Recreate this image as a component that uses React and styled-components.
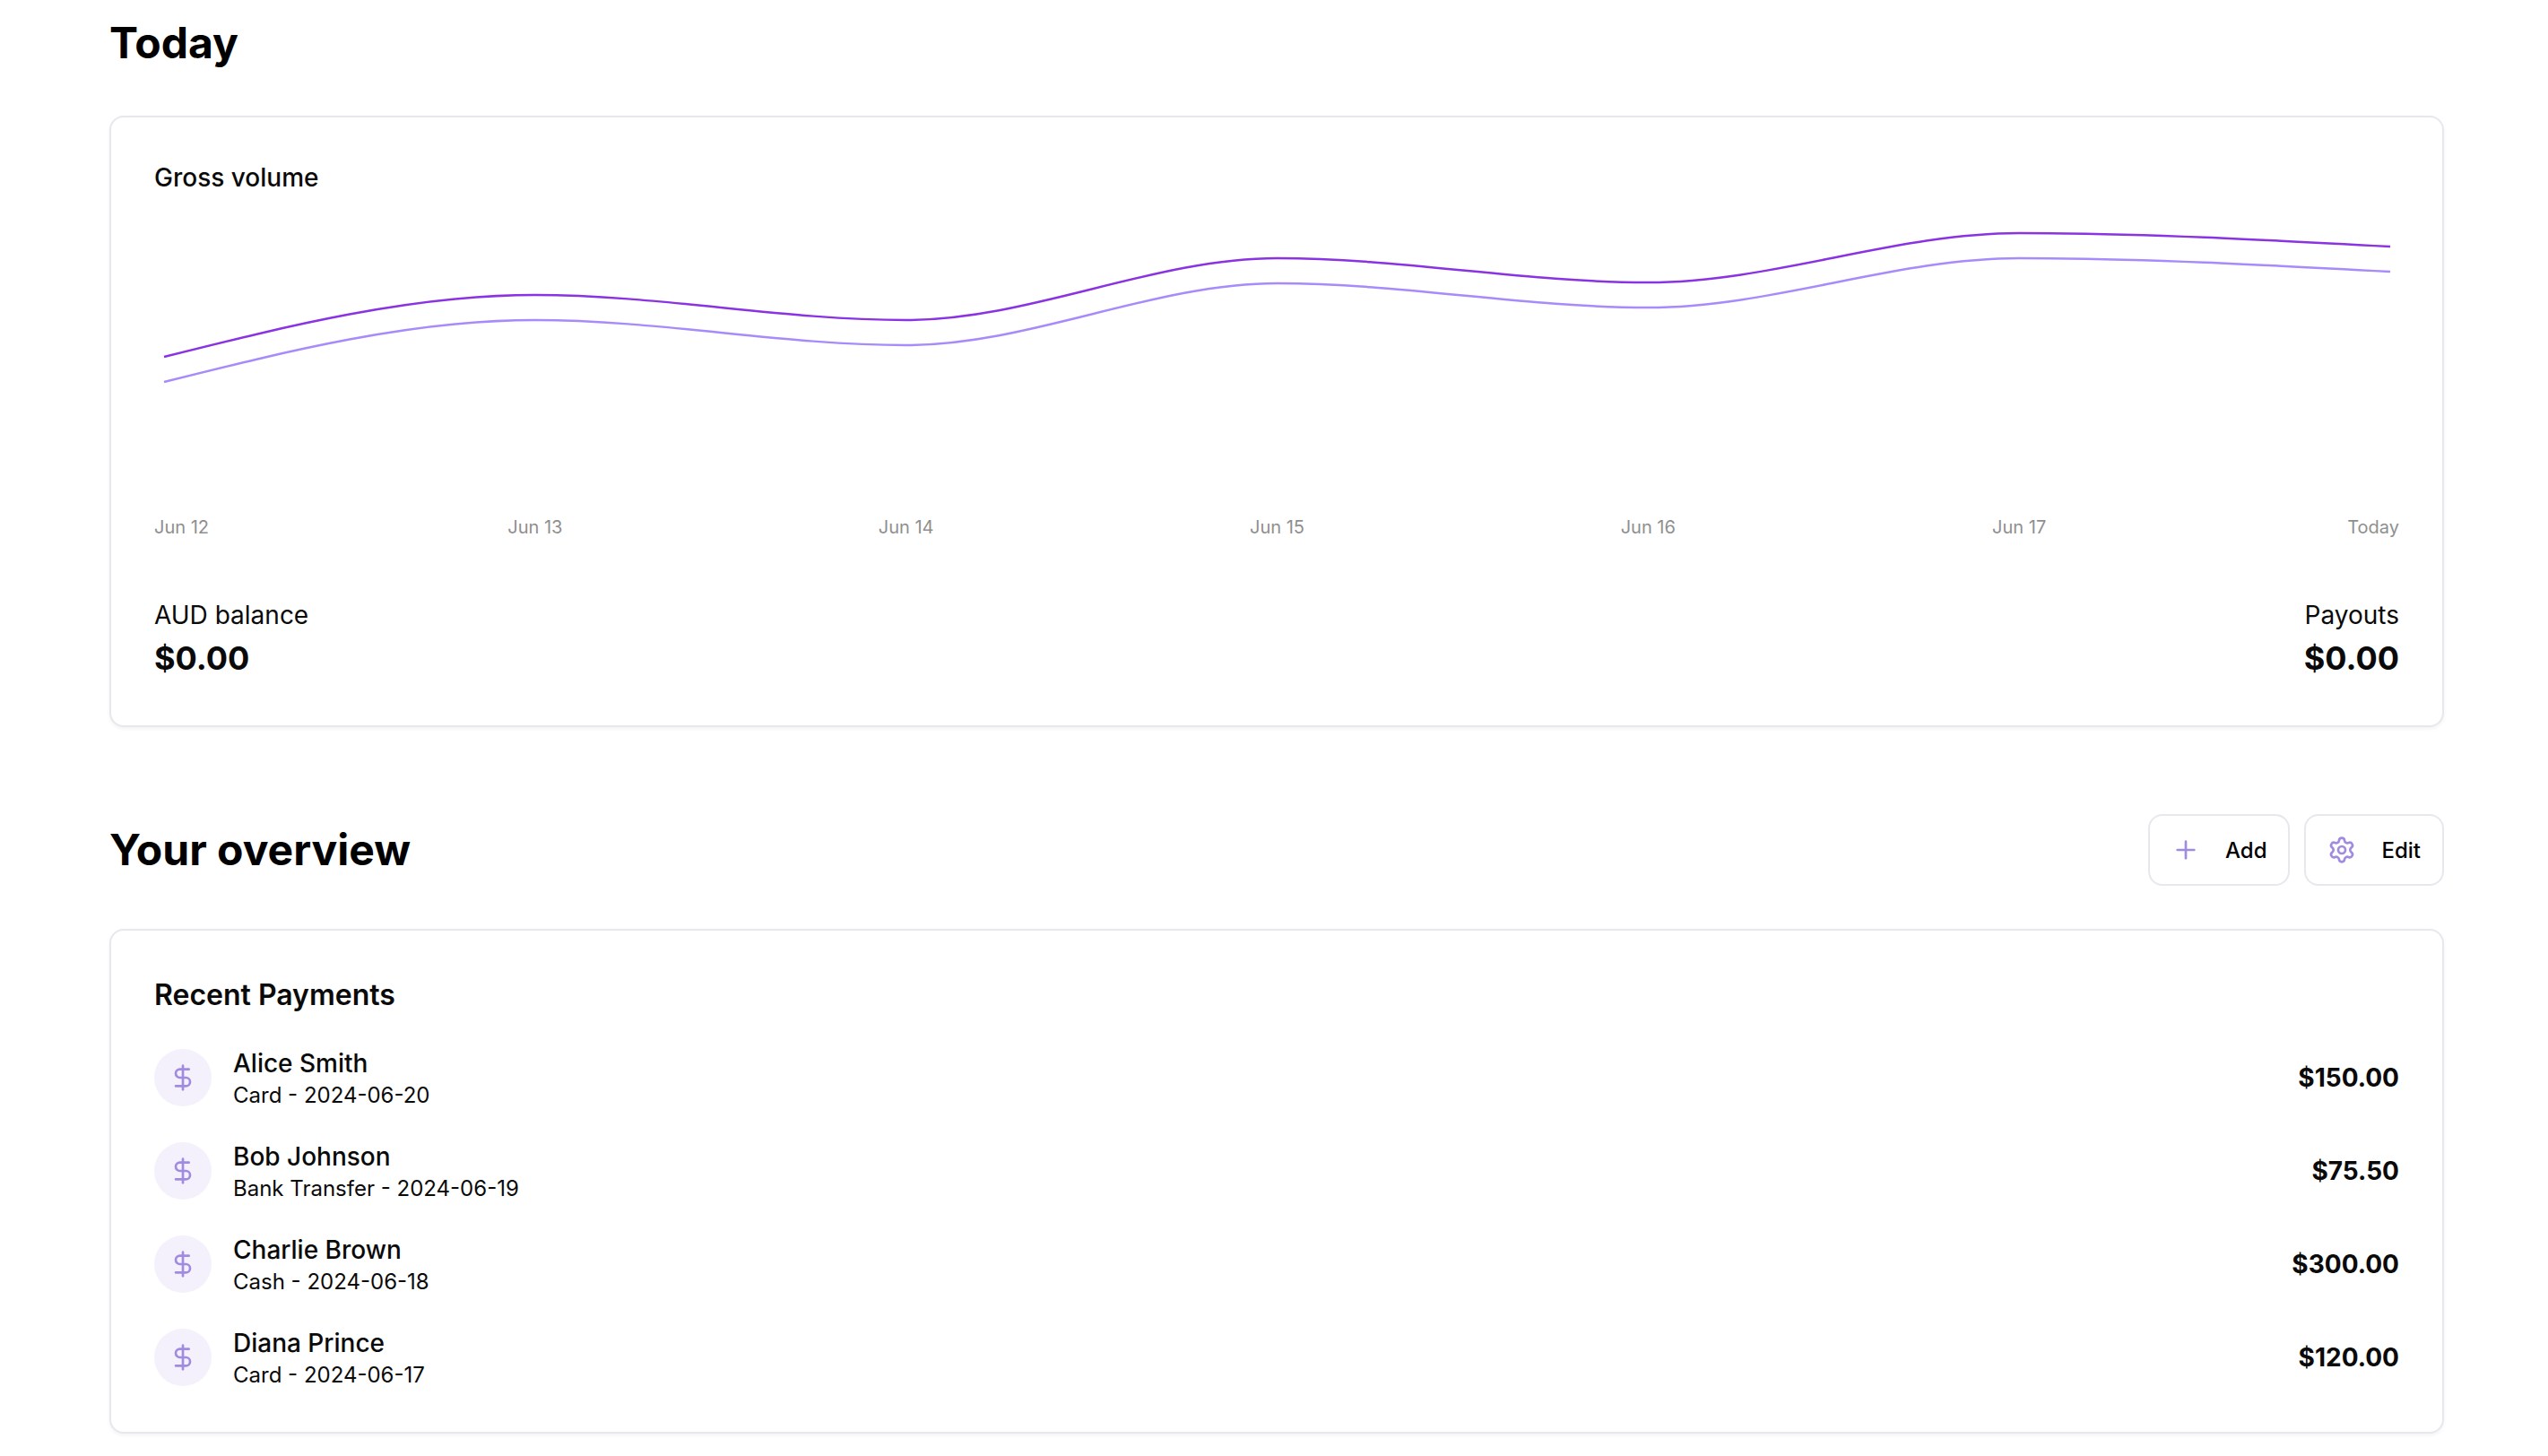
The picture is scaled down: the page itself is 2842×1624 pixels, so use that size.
import React from "react";
import styled, { createGlobalStyle } from "styled-components";
import { DollarSign, Plus, Settings } from "lucide-react";

const CHART_WIDTH = 2504;
const POINT_START = 11;
const POINT_STEP = 413.83;
const LINE_OFFSET = 28;

const volume = [182, 113, 141, 72, 99, 44, 59];
const ticks = ["Jun 12", "Jun 13", "Jun 14", "Jun 15", "Jun 16", "Jun 17", "Today"];

const payments = [
  { name: "Alice Smith", detail: "Card - 2024-06-20", amount: "$150.00" },
  { name: "Bob Johnson", detail: "Bank Transfer - 2024-06-19", amount: "$75.50" },
  { name: "Charlie Brown", detail: "Cash - 2024-06-18", amount: "$300.00" },
  { name: "Diana Prince", detail: "Card - 2024-06-17", amount: "$120.00" },
];

// monotone curve through evenly spaced points
function linePath(values, offset) {
  const xs = values.map((_, i) => POINT_START + i * POINT_STEP);
  const ys = values.map((v) => v + offset);
  const slopes = ys.slice(1).map((y, i) => (y - ys[i]) / POINT_STEP);
  const tangents = ys.map((_, i) => {
    if (i === 0 || i === ys.length - 1) return null;
    const a = slopes[i - 1];
    const b = slopes[i];
    if (a * b <= 0) return 0;
    return (2 * a * b) / (a + b);
  });
  tangents[0] = (3 * slopes[0] - tangents[1]) / 2;
  const last = ys.length - 1;
  tangents[last] = (3 * slopes[last - 1] - tangents[last - 1]) / 2;
  let d = `M${xs[0]},${ys[0]}`;
  for (let i = 0; i < last; i++) {
    const h = POINT_STEP / 3;
    d += `C${xs[i] + h},${ys[i] + tangents[i] * h} ${xs[i + 1] - h},${
      ys[i + 1] - tangents[i + 1] * h
    } ${xs[i + 1]},${ys[i + 1]}`;
  }
  return d;
}

function tickProps(i) {
  if (i === 0) return { x: 0, textAnchor: "start" };
  if (i === ticks.length - 1) return { x: CHART_WIDTH, textAnchor: "end" };
  return { x: POINT_START + i * POINT_STEP, textAnchor: "middle" };
}

function App() {
  return (
    <Page>
      <GlobalStyle />
      <PageTitle>Today</PageTitle>
      <VolumeCard>
        <CardLabel>Gross volume</CardLabel>
        <ChartSvg viewBox={`0 0 ${CHART_WIDTH} 425`}>
          <path d={linePath(volume, LINE_OFFSET)} fill="none" stroke="#a78bfa" strokeWidth="2.5" />
          <path d={linePath(volume, 0)} fill="none" stroke="#8a33e2" strokeWidth="2.5" />
          {ticks.map((tick, i) => (
            <TickText key={tick} y="379" {...tickProps(i)}>
              {tick}
            </TickText>
          ))}
        </ChartSvg>
        <StatsRow>
          <Stat>
            <StatLabel>AUD balance</StatLabel>
            <StatValue>$0.00</StatValue>
          </Stat>
          <Stat align="right">
            <StatLabel>Payouts</StatLabel>
            <StatValue>$0.00</StatValue>
          </Stat>
        </StatsRow>
      </VolumeCard>
      <OverviewHeader>
        <PageTitle as="h2">Your overview</PageTitle>
        <Actions>
          <ActionButton>
            <Plus size={32} strokeWidth={2} />
            Add
          </ActionButton>
          <ActionButton>
            <Settings size={32} strokeWidth={2} />
            Edit
          </ActionButton>
        </Actions>
      </OverviewHeader>
      <PaymentsCard>
        <PaymentsTitle>Recent Payments</PaymentsTitle>
        <PaymentList>
          {payments.map((payment) => (
            <PaymentRow key={payment.name}>
              <PaymentIcon>
                <DollarSign size={32} strokeWidth={2} />
              </PaymentIcon>
              <PaymentText>
                <PaymentName>{payment.name}</PaymentName>
                <PaymentDetail>{payment.detail}</PaymentDetail>
              </PaymentText>
              <PaymentAmount>{payment.amount}</PaymentAmount>
            </PaymentRow>
          ))}
        </PaymentList>
      </PaymentsCard>
    </Page>
  );
}

export default App;

const GlobalStyle = createGlobalStyle`
  * {
    box-sizing: border-box;
  }
  body {
    margin: 0;
    background: #fff;
    color: #0a0a0a;
    font-family: Inter, "Liberation Sans", sans-serif;
  }
`;
const Page = styled.div`
  height: 1624px;
  overflow: hidden;
  padding: 20px 116px 0 122px;
`;
const PageTitle = styled.h1`
  margin: 0;
  color: #000;
  font-size: 48px;
  font-weight: 700;
  line-height: 56px;
`;
const Card = styled.section`
  background: #fff;
  border: 2px solid #e7e7ee;
  border-radius: 16px;
  box-shadow: 0 2px 4px rgba(0, 0, 0, 0.05);
`;
const VolumeCard = styled(Card)`
  height: 682px;
  margin-top: 53px;
  padding: 49px 48px 48px;
`;
const CardLabel = styled.div`
  font-size: 28px;
  font-weight: 500;
  line-height: 36px;
`;
const ChartSvg = styled.svg`
  display: block;
  width: 100%;
  height: 425px;
  margin-bottom: 25px;
`;
const TickText = styled.text`
  fill: #8f8f8f;
  font-family: Inter, sans-serif;
  font-size: 20px;
`;
const StatsRow = styled.div`
  display: flex;
  justify-content: space-between;
`;
const Stat = styled.div`
  text-align: ${(props) => props.align || "left"};
`;
const StatLabel = styled.div`
  font-size: 28px;
  line-height: 40px;
`;
const StatValue = styled.div`
  font-size: 36px;
  font-weight: 700;
  line-height: 56px;
`;
const OverviewHeader = styled.div`
  display: flex;
  align-items: center;
  justify-content: space-between;
  margin-top: 97px;
`;
const Actions = styled.div`
  display: flex;
  gap: 16px;
`;
const ActionButton = styled.button`
  display: flex;
  align-items: center;
  gap: 28px;
  height: 80px;
  padding: 0 24px;
  background: #fff;
  border: 2px solid #e7e7ee;
  border-radius: 16px;
  color: #000;
  font-family: Inter, sans-serif;
  font-size: 24px;
  font-weight: 500;

  svg {
    color: #a08be0;
  }
`;
const PaymentsCard = styled(Card)`
  height: 563px;
  margin-top: 48px;
  padding: 48px;
`;
const PaymentsTitle = styled.h3`
  margin: 0 0 36px;
  font-size: 32px;
  font-weight: 600;
  line-height: 48px;
`;
const PaymentList = styled.div`
  display: flex;
  flex-direction: column;
  gap: 40px;
`;
const PaymentRow = styled.div`
  display: flex;
  align-items: center;
  gap: 24px;
  height: 64px;
`;
const PaymentIcon = styled.div`
  display: flex;
  align-items: center;
  justify-content: center;
  width: 64px;
  height: 64px;
  border-radius: 50%;
  background: #f4f1fd;
  color: #a08be0;
`;
const PaymentText = styled.div`
  flex: 1;
`;
const PaymentName = styled.div`
  font-size: 28px;
  font-weight: 500;
  line-height: 40px;
`;
const PaymentDetail = styled.div`
  font-size: 24px;
  line-height: 32px;
`;
const PaymentAmount = styled.div`
  font-size: 28px;
  font-weight: 700;
`;
